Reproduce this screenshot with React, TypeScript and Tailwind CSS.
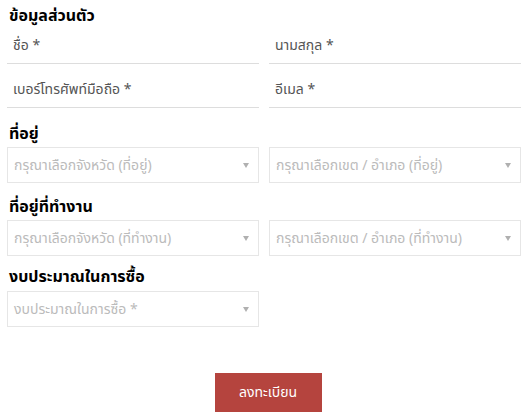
const font = { fontFamily: '"Noto Sans Thai", "Noto Sans", "Liberation Sans", sans-serif' }

function Field({ label }: { label: string }) {
    return (
        <div className="flex h-9 items-center border-b border-[#dddddd] px-1.5 text-[14px] text-[#555555]">
            {label}
        </div>
    )
}

function Select({ label }: { label: string }) {
    return (
        <div className="flex h-9 items-center justify-between border border-[#e6e6e6] pl-1.5 pr-[9px] text-[14px] text-[#bbbbbb]">
            <span>{label}</span>
            <span className="h-0 w-0 border-x-[3px] border-t-[5px] border-x-transparent border-t-[#b0b0b0]" />
        </div>
    )
}

function Heading({ children }: { children: React.ReactNode }) {
    return <h2 className="px-0.5 text-[16px] font-bold leading-[22px] text-black">{children}</h2>
}

export default function App() {
    return (
        <div className="h-[420px] w-[530px] bg-white pl-[7px] pr-[9px] pt-[5px]" style={font}>
            <Heading>ข้อมูลส่วนตัว</Heading>
            <div className="mt-px grid grid-cols-2 gap-x-[10px] gap-y-2">
                <Field label="ชื่อ *" />
                <Field label="นามสกุล *" />
                <Field label="เบอร์โทรศัพท์มือถือ *" />
                <Field label="อีเมล *" />
            </div>

            <div className="mt-[15px]">
                <Heading>ที่อยู่</Heading>
                <div className="mt-[2px] grid grid-cols-2 gap-x-[10px]">
                    <Select label="กรุณาเลือกจังหวัด (ที่อยู่)" />
                    <Select label="กรุณาเลือกเขต / อำเภอ (ที่อยู่)" />
                </div>
            </div>

            <div className="mt-[13px]">
                <Heading>ที่อยู่ที่ทำงาน</Heading>
                <div className="mt-[2px] grid grid-cols-2 gap-x-[10px]">
                    <Select label="กรุณาเลือกจังหวัด (ที่ทำงาน)" />
                    <Select label="กรุณาเลือกเขต / อำเภอ (ที่ทำงาน)" />
                </div>
            </div>

            <div className="mt-[10px]">
                <Heading>งบประมาณในการซื้อ</Heading>
                <div className="mt-[3px] grid grid-cols-2 gap-x-[10px]">
                    <Select label="งบประมาณในการซื้อ *" />
                </div>
            </div>

            <div className="mt-[46px] flex justify-center pl-2">
                <button className="h-[39px] w-[107px] bg-[#b5443e] text-[14px] text-white">ลงทะเบียน</button>
            </div>
        </div>
    )
}
